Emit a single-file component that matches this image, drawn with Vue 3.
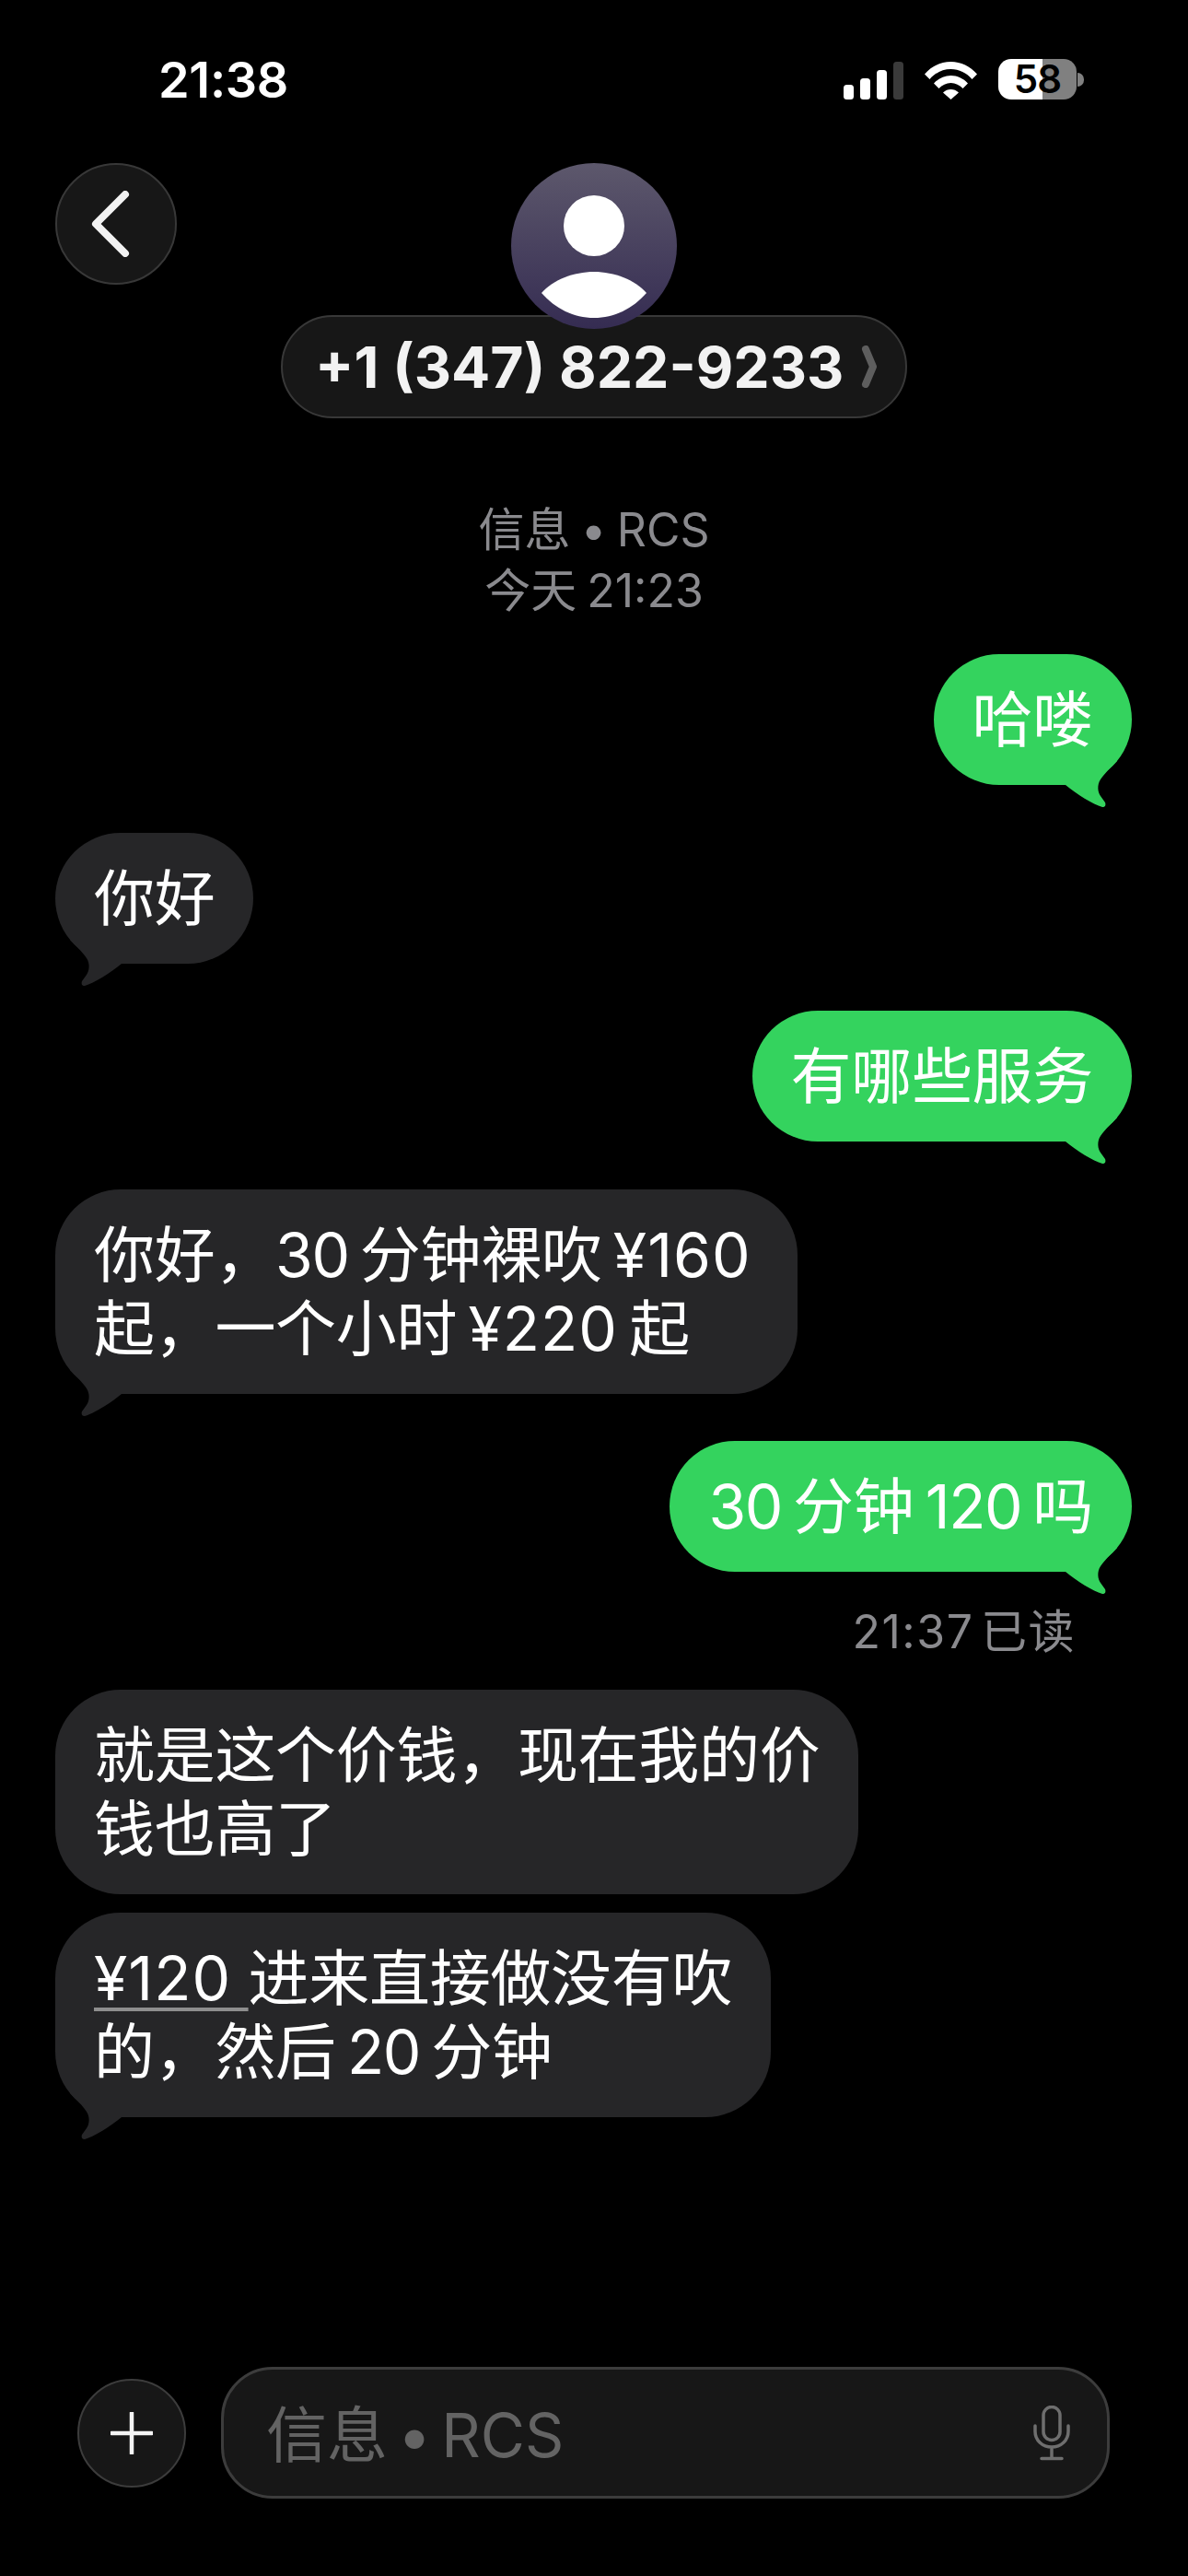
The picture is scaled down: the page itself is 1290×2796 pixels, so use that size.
<template>
  <main class="phone">
    <div class="status">
      <span class="time">21:38</span>
      <div class="status-icons">
        <svg class="signal" width="65" height="41" viewBox="0 0 65 41">
          <rect x="0" y="25" width="11" height="16" rx="3.5" fill="#fff" />
          <rect x="18" y="18" width="11" height="23" rx="3.5" fill="#fff" />
          <rect x="36" y="9" width="11" height="32" rx="3.5" fill="#fff" />
          <rect x="54" y="0" width="11" height="41" rx="3.5" fill="#3a3a3a" />
        </svg>
        <svg class="wifi" width="57" height="41" viewBox="0 0 57 41">
          <path d="M0 13.5C7.5 5 17.5 0 28.500 0S49.500 5 57 13.500L51.500 19C45.500 12 37.500 8 28.500 8S11.500 12 5.500 19Z" fill="#fff" />
          <path d="M10 23.500C15 18 21.500 15 28.500 15S42 18 47 23.500L41.500 29C38 25.500 33.500 23 28.500 23S19 25.500 15.500 29Z" fill="#fff" />
          <path d="M20 33.500C22.500 31 25.500 30 28.500 30S34.500 31 37 33.500L28.500 41Z" fill="#fff" />
        </svg>
        <div class="battery">
          <div class="battery-body"><span>58</span></div>
          <div class="battery-nub"></div>
        </div>
      </div>
    </div>

    <header class="header">
      <button class="back">
        <svg width="44" height="72" viewBox="0 0 44 72">
          <path d="M37 4L5 36L37 68" fill="none" stroke="#f2f2f2" stroke-width="8" stroke-linecap="round" stroke-linejoin="round" />
        </svg>
      </button>
      <div class="contact">
        <div class="avatar">
          <svg width="180" height="180" viewBox="0 0 180 180">
            <circle cx="90" cy="68" r="33" fill="#fff" />
            <path d="M33 141C45 127 68 118 90 118C112 118 135 127 147 141C132 158 112 168 90 168C68 168 48 158 33 141Z" fill="#fff" />
          </svg>
        </div>
        <div class="name">
          <span>+1 (347) 822-9233</span>
          <svg width="20" height="46" viewBox="0 0 20 46">
            <path d="M6 4L14 23L6 42" fill="none" stroke="#5e5e5e" stroke-width="8" stroke-linecap="round" stroke-linejoin="round" />
          </svg>
        </div>
      </div>
    </header>

    <section class="meta">
      <div>信息 • RCS</div>
      <div>今天 21:23</div>
    </section>

    <section class="thread">
      <template v-for="msg in messages" :key="msg.id">
        <div class="bubble" :class="[msg.me ? 'me' : 'them', { 'no-tail': msg.noTail, trail: msg.trail }]">
          <div v-for="(line, i) in msg.lines" :key="i" class="line">
            <span v-if="line.link" class="link cash">{{ line.link }}</span>
            <span
              v-for="(seg, j) in split(line.text)"
              :key="j"
              :class="segClass(seg)">{{ seg }}</span>
          </div>
          <svg v-if="!msg.noTail" class="tail" width="80" height="50" viewBox="0 0 80 50">
            <path d="M2 0L64 0C56 8 50 14 46 20C42 26 43 34 46 38L51 45C52 48 51 50 48 50C38 47 20 36 8 26L2 26Z" />
          </svg>
        </div>
        <div v-if="msg.read" class="read">{{ msg.read }}</div>
      </template>
    </section>

    <footer class="composer">
      <button class="plus">
        <svg width="46" height="46" viewBox="0 0 46 46">
          <path d="M23 1V45M1 23H45" stroke="#f4f4f4" stroke-width="4.500" stroke-linecap="round" />
        </svg>
      </button>
      <div class="input">
        <span class="placeholder">信息 • RCS</span>
        <svg width="40" height="60" viewBox="0 0 40 60">
          <rect x="11" y="1.500" width="18" height="36" rx="9" fill="none" stroke="#6e6e6e" stroke-width="3.500" />
          <path d="M2 22V28C2 38 10 45 20 45S38 38 38 28V22M20 45V56M9 57.500H31" fill="none" stroke="#6e6e6e" stroke-width="3.500" stroke-linecap="round" />
        </svg>
      </div>
    </footer>
  </main>
</template>

<script setup>
const messages = [
  { id: 1, me: true, lines: [{ text: '哈喽' }] },
  { id: 2, me: false, lines: [{ text: '你好' }] },
  { id: 3, me: true, lines: [{ text: '有哪些服务' }] },
  { id: 4, me: false, trail: true, lines: [{ text: '你好，30 分钟裸吹 ¥160' }, { text: '起，一个小时 ¥220 起' }] },
  { id: 5, me: true, lines: [{ text: '30 分钟 120 吗' }], read: '21:37 已读' },
  { id: 6, me: false, noTail: true, lines: [{ text: '就是这个价钱，现在我的价' }, { text: '钱也高了' }] },
  { id: 7, me: false, lines: [{ link: '¥120 ', text: '进来直接做没有吹' }, { text: '的，然后 20 分钟' }] }
]

// digits are tighter than the CJK text around them, prices a bit less so
const split = (text) => text.split(/(¥?\d+)/).filter(Boolean)
const segClass = (seg) => (seg.startsWith('¥') ? 'cash' : /\d/.test(seg) ? 'num' : '')
</script>

<style>
html,
body {
  background: #000;
}
</style>

<style scoped>
.phone {
  width: 1290px;
  height: 2796px;
  background: #000;
  color: #fff;
  display: flex;
  flex-direction: column;
  font-family: Inter, "Noto Sans CJK SC", sans-serif;
  overflow: hidden;
}

.status {
  height: 177px;
  box-sizing: border-box;
  padding: 64px 113px 0 172px;
  display: flex;
  justify-content: space-between;
  align-items: flex-start;
}

.time {
  font-size: 54px;
  font-weight: 600;
  line-height: 46px;
  letter-spacing: -0.3px;
}

.status-icons {
  display: flex;
  align-items: flex-end;
  height: 44px;
}

.signal {
  margin-right: 23px;
}

.wifi {
  margin-right: 23px;
}

.battery {
  display: flex;
  align-items: center;
}

.battery-body {
  width: 85px;
  height: 44px;
  border-radius: 14px;
  background: linear-gradient(90deg, #fff 0, #fff 57%, #808080 57%, #808080 100%);
  color: #000;
  font-size: 42px;
  font-weight: 600;
  letter-spacing: -1px;
  line-height: 44px;
  text-align: center;
}

.battery-nub {
  width: 7px;
  height: 15px;
  margin-left: 1px;
  background: #808080;
  border-radius: 0 8px 8px 0;
}

.header {
  height: 277px;
  padding: 0 60px;
  display: grid;
  grid-template-columns: 1fr auto 1fr;
}

.back {
  width: 132px;
  height: 132px;
  padding: 0;
  border: 2px solid #383838;
  border-radius: 50%;
  background: #171717;
  display: flex;
  align-items: center;
  justify-content: center;
}

.back svg {
  width: 44px;
  margin-right: 10px;
}

.contact {
  display: flex;
  flex-direction: column;
  align-items: center;
}

.avatar {
  width: 180px;
  height: 180px;
  border-radius: 50%;
  background: linear-gradient(180deg, #5d586c 0%, #352c52 100%);
  position: relative;
  z-index: 1;
}

.name {
  width: 680px;
  height: 112px;
  box-sizing: border-box;
  margin-top: -15px;
  padding-left: 35px;
  border: 2px solid #383838;
  border-radius: 56px;
  background: #171717;
  display: flex;
  align-items: center;
  gap: 18px;
  color: #f2f2f2;
  font-size: 62.5px;
  font-weight: 700;
  white-space: nowrap;
}

.meta {
  margin-top: 88px;
  color: #8a8a8e;
  font-size: 50px;
  word-spacing: -3px;
  line-height: 66px;
  text-align: center;
}

.thread {
  margin-top: 36px;
  padding: 0 61px 0 60px;
  display: flex;
  flex-direction: column;
}

.bubble {
  position: relative;
  padding: 31px 42px;
  margin-bottom: 51.500px;
  border-radius: 71px;
  font-size: 66px;
  letter-spacing: -0.3px;
  word-spacing: -6px;
  line-height: 80px;
  white-space: pre;
}

.trail {
  padding-right: 50px;
}

.num {
  letter-spacing: -1.500px;
}

.cash {
  letter-spacing: 1px;
}

.no-tail {
  margin-bottom: 20px;
}

.me {
  align-self: flex-end;
  background: #34d35e;
}

.them {
  align-self: flex-start;
  background: #262628;
}

.tail {
  position: absolute;
  bottom: -24px;
}

.me .tail {
  right: 0;
  fill: #34d35e;
}

.them .tail {
  left: 0;
  fill: #262628;
  transform: scaleX(-1);
}

.link {
  word-spacing: -1px;
  text-decoration: underline;
  text-decoration-color: #8e8e8e;
  text-decoration-thickness: 4px;
  text-underline-offset: 8px;
}

.read {
  align-self: flex-end;
  margin: -19.500px 61px 30px 0;
  color: #8a8a8e;
  font-size: 50px;
  letter-spacing: 1.500px;
  word-spacing: -8px;
  line-height: 66px;
}

.composer {
  margin-top: auto;
  margin-bottom: 84px;
  padding: 0 85px 0 84px;
  display: flex;
  align-items: center;
  gap: 38px;
}

.plus {
  width: 118px;
  height: 118px;
  padding: 0;
  flex-shrink: 0;
  border: 2px solid #3c3c3c;
  border-radius: 50%;
  background: #171717;
  display: flex;
  align-items: center;
  justify-content: center;
}

.input {
  flex: 1;
  height: 143px;
  box-sizing: border-box;
  padding: 0 40px 0 46px;
  border: 3px solid #3c3c3c;
  border-radius: 56px;
  background: #171717;
  display: flex;
  align-items: center;
  justify-content: space-between;
}

.placeholder {
  margin-bottom: 6px;
  color: #636363;
  font-size: 66px;
  word-spacing: -8px;
}
</style>
